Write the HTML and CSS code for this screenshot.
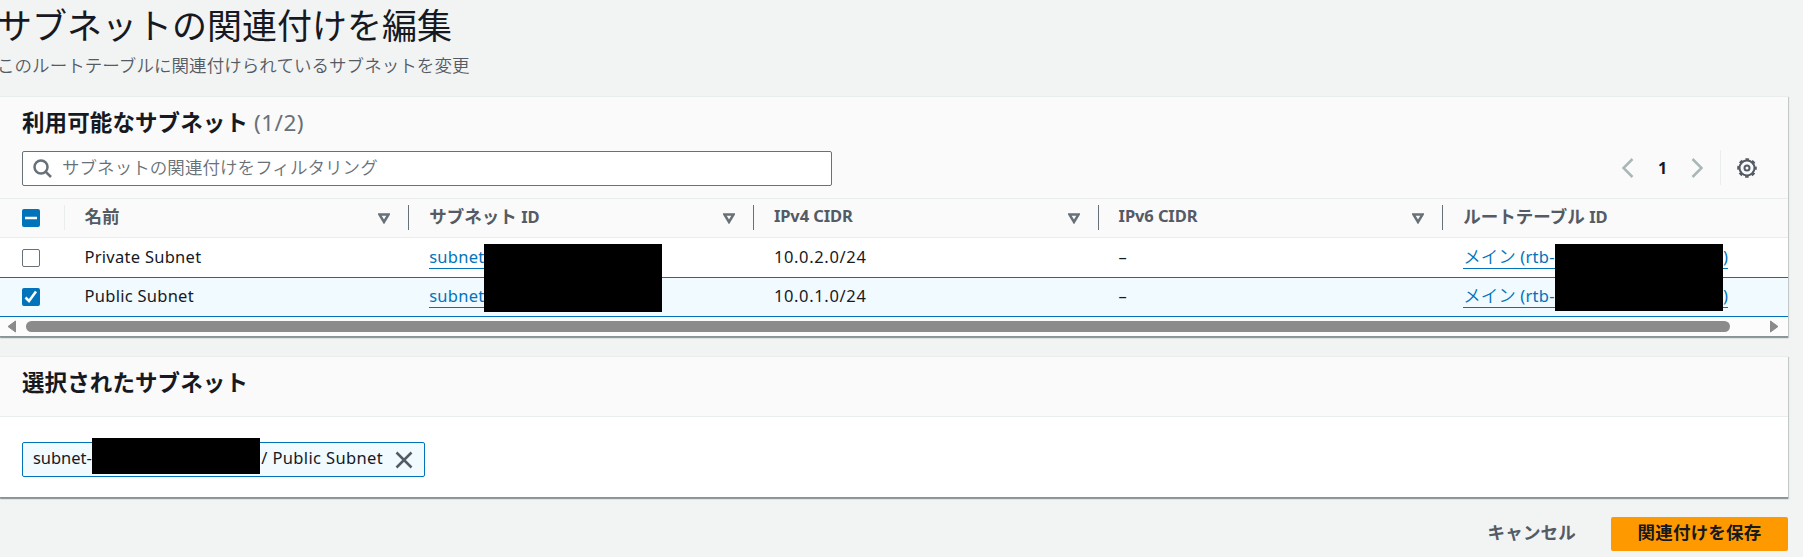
FILE: index.html
```html
<!DOCTYPE html>
<html lang="ja">
<head>
<meta charset="utf-8">
<title>サブネットの関連付けを編集</title>
<link rel="stylesheet" href="styles.css">
</head>
<body>
<main class="page">
  <header class="page-header">
    <h1 class="title">サブネットの関連付けを編集</h1>
    <p class="description">このルートテーブルに関連付けられているサブネットを変更</p>
  </header>

  <section class="card available">
    <div class="card-header">
      <h2 class="heading">利用可能なサブネット <span class="counter">(1/2)</span></h2>
      <div class="toolbar">
        <div class="search">
          <svg class="search-icon" viewBox="0 0 20 20"><circle cx="8" cy="8" r="6.5"/><path d="M12.800 12.800 18 18"/></svg>
          <span class="placeholder">サブネットの関連付けをフィルタリング</span>
        </div>
        <div class="pagination">
          <svg class="chevron" viewBox="0 0 12 20"><path d="M10.5 1 1.5 10l9 9"/></svg>
          <span class="page-number">1</span>
          <svg class="chevron" viewBox="0 0 12 20"><path d="m1.5 1 9 9-9 9"/></svg>
          <span class="rule"></span>
          <svg class="gear" viewBox="0 0 20 20"><circle cx="10" cy="10" r="7.500"/><circle class="teeth" cx="10" cy="10" r="8.800"/><circle cx="10" cy="10" r="2.500"/></svg>
        </div>
      </div>
    </div>

    <div class="table">
      <div class="row head">
        <div class="select"><span class="checkbox checked"><svg viewBox="0 0 18 18"><path d="M3 9h12"/></svg></span></div>
        <div class="cell">名前<svg class="sort" viewBox="0 0 12 11"><path d="M1.400 1.400h9.200L6 9z"/></svg></div>
        <div class="cell"><span>サブネット <span class="latin">ID</span></span><svg class="sort" viewBox="0 0 12 11"><path d="M1.400 1.400h9.200L6 9z"/></svg></div>
        <div class="cell"><span class="latin">IPv4 CIDR</span><svg class="sort" viewBox="0 0 12 11"><path d="M1.400 1.400h9.200L6 9z"/></svg></div>
        <div class="cell"><span class="latin">IPv6 CIDR</span><svg class="sort" viewBox="0 0 12 11"><path d="M1.400 1.400h9.200L6 9z"/></svg></div>
        <div class="cell"><span>ルートテーブル <span class="latin">ID</span></span><svg class="sort" viewBox="0 0 12 11"><path d="M1.400 1.400h9.200L6 9z"/></svg></div>
      </div>
      <div class="row first">
        <div class="select"><span class="checkbox"></span></div>
        <div class="cell"><span class="latin">Private Subnet</span></div>
        <div class="cell"><a class="link subnet-link"><span class="latin">subnet-</span></a><span class="mask subnet-mask"></span></div>
        <div class="cell"><span class="latin number">10.0.2.0/24</span></div>
        <div class="cell"><span class="latin">–</span></div>
        <div class="cell"><a class="link route-link"><span>メイン <span class="latin">(rtb-</span></span><span class="latin">)</span></a><span class="mask route-mask"></span></div>
      </div>
      <div class="row selected">
        <div class="select"><span class="checkbox checked"><svg viewBox="0 0 18 18"><path d="m3.500 9.500 3.500 3.500 7-9.500"/></svg></span></div>
        <div class="cell"><span class="latin">Public Subnet</span></div>
        <div class="cell"><a class="link subnet-link"><span class="latin">subnet-</span></a></div>
        <div class="cell"><span class="latin number">10.0.1.0/24</span></div>
        <div class="cell"><span class="latin">–</span></div>
        <div class="cell"><a class="link route-link"><span>メイン <span class="latin">(rtb-</span></span><span class="latin">)</span></a></div>
      </div>
    </div>
    <div class="scrollbar">
      <svg class="arrow" viewBox="0 0 10 13"><path d="M8.500 1v11L1 6.500z"/></svg>
      <span class="thumb"></span>
      <svg class="arrow" viewBox="0 0 10 13"><path d="M1.500 1v11L9 6.500z"/></svg>
    </div>
  </section>

  <section class="card chosen">
    <div class="chosen-header"><h2 class="heading">選択されたサブネット</h2></div>
    <div class="chosen-body">
      <div class="token">
        <span class="latin token-id">subnet-</span>
        <span class="mask token-mask"></span>
        <span class="latin token-name">/ Public Subnet</span>
        <svg class="close" viewBox="0 0 18 18"><path d="m1.500 1.500 15 15m0-15-15 15"/></svg>
      </div>
    </div>
  </section>

  <footer class="actions">
    <button class="button cancel">キャンセル</button>
    <button class="button save">関連付けを保存</button>
  </footer>
</main>
</body>
</html>
```
FILE: styles.css
```css
* { box-sizing: border-box; }

body {
  margin: 0;
  height: 557px;
  overflow: hidden;
  background: #f2f3f3;
  color: #16191f;
  font: 17.5px/26px "Noto Sans", "Noto Sans CJK JP", sans-serif;
}

svg { display: block; flex: none; fill: none; stroke: #687078; stroke-width: 2.5; }
h1, h2, p { margin: 0; }

.page { width: 1788px; }
.page-header { height: 96px; }
.title {
  padding-top: 3px;
  margin-left: -3px;
  font-size: 35px;
  font-weight: 400;
  line-height: 45px;
}
.description {
  margin: 4px 0 0 -3px;
  color: #545b64;
  font-weight: 350;
  letter-spacing: .06px;
}

.card {
  background: #fff;
  border-top: 1px solid #eaeded;
  box-shadow: 0 1px 1px #001c244d, 1px 1px 1px #001c2426, inset 0 -1px 0 #879596;
}
.available { height: 241px; overflow: hidden; clip-path: inset(0 -3px -3px 0); }
.card-header { height: 102px; padding: 12px 22px 0; background: #fafafa; border-bottom: 1px solid #eaeded; }
.heading { font-size: 22.5px; font-weight: 700; line-height: 28px; letter-spacing: .1px; }
.counter { color: #687078; font-weight: 400; letter-spacing: .5px; }
.toolbar { display: flex; justify-content: space-between; margin-top: 14px; }
.search {
  display: flex;
  align-items: center;
  width: 810px;
  height: 35px;
  padding-left: 10px;
  background: #fff;
  border: 1px solid #687078;
  border-radius: 2px;
}
.search-icon { width: 20px; height: 20px; }
.placeholder { margin: -4px 0 0 9px; color: #687078; font-weight: 350; letter-spacing: .06px; }
.pagination { display: flex; align-items: center; height: 33px; margin-right: 9px; }
.chevron { width: 12px; height: 20px; stroke: #aab7b8; }
.page-number { width: 57px; font-size: 16px; font-weight: 700; text-align: center; }
.rule { width: 1px; height: 35px; margin: 0 16px 0 17px; background: #eaeded; }
.gear { width: 20px; height: 20px; stroke: #545b64; stroke-width: 2; }
.teeth { stroke-dasharray: 3.600 3.311; stroke-dashoffset: 1.800; }

.table { width: 1788px; overflow: hidden; }
.row {
  display: grid;
  grid-template-columns: 63.500px repeat(4, 344.700px) 376px;
  height: 40px;
  border-bottom: 1px solid #0073bb;
}
.head { height: 39px; background: #fafafa; border-color: #eaeded; color: #545b64; font-weight: 700; }
.selected { height: 39px; background: #f1faff; }
.select { display: flex; align-items: center; padding-left: 22px; }
.checkbox { width: 18px; height: 18px; background: #fff; border: 1px solid #687078; border-radius: 2px; }
.checked { background: #0073bb; border: 0; }
.checked svg { width: 18px; height: 18px; stroke: #fff; }
.cell { position: relative; display: flex; align-items: center; padding: 0 18px 3px 21px; white-space: nowrap; }
.first .cell { padding-bottom: 2px; }
.head .cell { justify-content: space-between; padding-bottom: 4px; }
.head .cell::before {
  content: "";
  position: absolute;
  left: 0;
  top: 6px;
  width: 1px;
  height: 25px;
  background: #687078;
}
.head .cell:nth-child(2)::before { background: #eaeded; }
.sort { width: 12px; height: 11px; margin-top: 4px; }
.latin { font-family: "Noto Sans", sans-serif; font-size: 16.500px; letter-spacing: .27px; }
.head .latin { letter-spacing: -.1px; }
.number { letter-spacing: .65px; }
.link { display: flex; height: 24px; line-height: 23px; color: #0073bb; border-bottom: 1px solid #0073bb; font-weight: 400; }
.first .link { margin-top: 0; }
.selected .link { margin-top: 1px; }
.route-link { width: 265px; justify-content: space-between; font-weight: 350; }
.route-link .latin { font-weight: 400; }

/* Redacted identifiers */
.mask { position: absolute; z-index: 2; background: #000; }
.subnet-mask { left: 75.800px; top: 6px; width: 178px; height: 68px; }
.route-mask { left: 112.700px; top: 6px; width: 168px; height: 67px; }
.token-mask { left: 69px; top: -5px; width: 168px; height: 36px; }

.scrollbar { display: flex; align-items: center; height: 19px; padding: 0 9px 0 7px; margin-bottom: 1px; background: #fcfcfc; }
.arrow { width: 10px; height: 13px; fill: #8b8b8b; stroke: #8b8b8b; stroke-width: 1; }
.thumb { flex: 1; height: 11px; margin: 0 39px 0 9px; background: #8b8b8b; border-radius: 6px; }

.chosen { height: 142px; margin-top: 19px; }
.chosen-header { height: 60px; padding: 12px 22px 0; background: #fafafa; border-bottom: 1px solid #eaeded; }
.chosen-body { padding: 25px 22px 0; }
.token {
  position: relative;
  display: flex;
  align-items: center;
  justify-content: space-between;
  width: 403px;
  height: 35px;
  padding: 0 11px 0 10px;
  background: #f1faff;
  border: 1px solid #0073bb;
  border-radius: 2px;
}
.token .latin { margin-top: -3px; }
.token .token-id { letter-spacing: -.05px; }
.token .token-name { margin-left: auto; letter-spacing: .36px; }
.close { width: 18px; height: 18px; margin-left: 12px; stroke: #545b64; }

.actions { display: flex; justify-content: flex-end; gap: 8px; padding-top: 19px; }
.button {
  height: 34px;
  padding: 0 27px 5px;
  border: 0;
  border-radius: 2px;
  background: none;
  color: #545b64;
  font: inherit;
  font-weight: 700;
  letter-spacing: .2px;
}
.save { width: 177px; padding: 0 0 5px; background: #f90; color: #16191f; }
```
